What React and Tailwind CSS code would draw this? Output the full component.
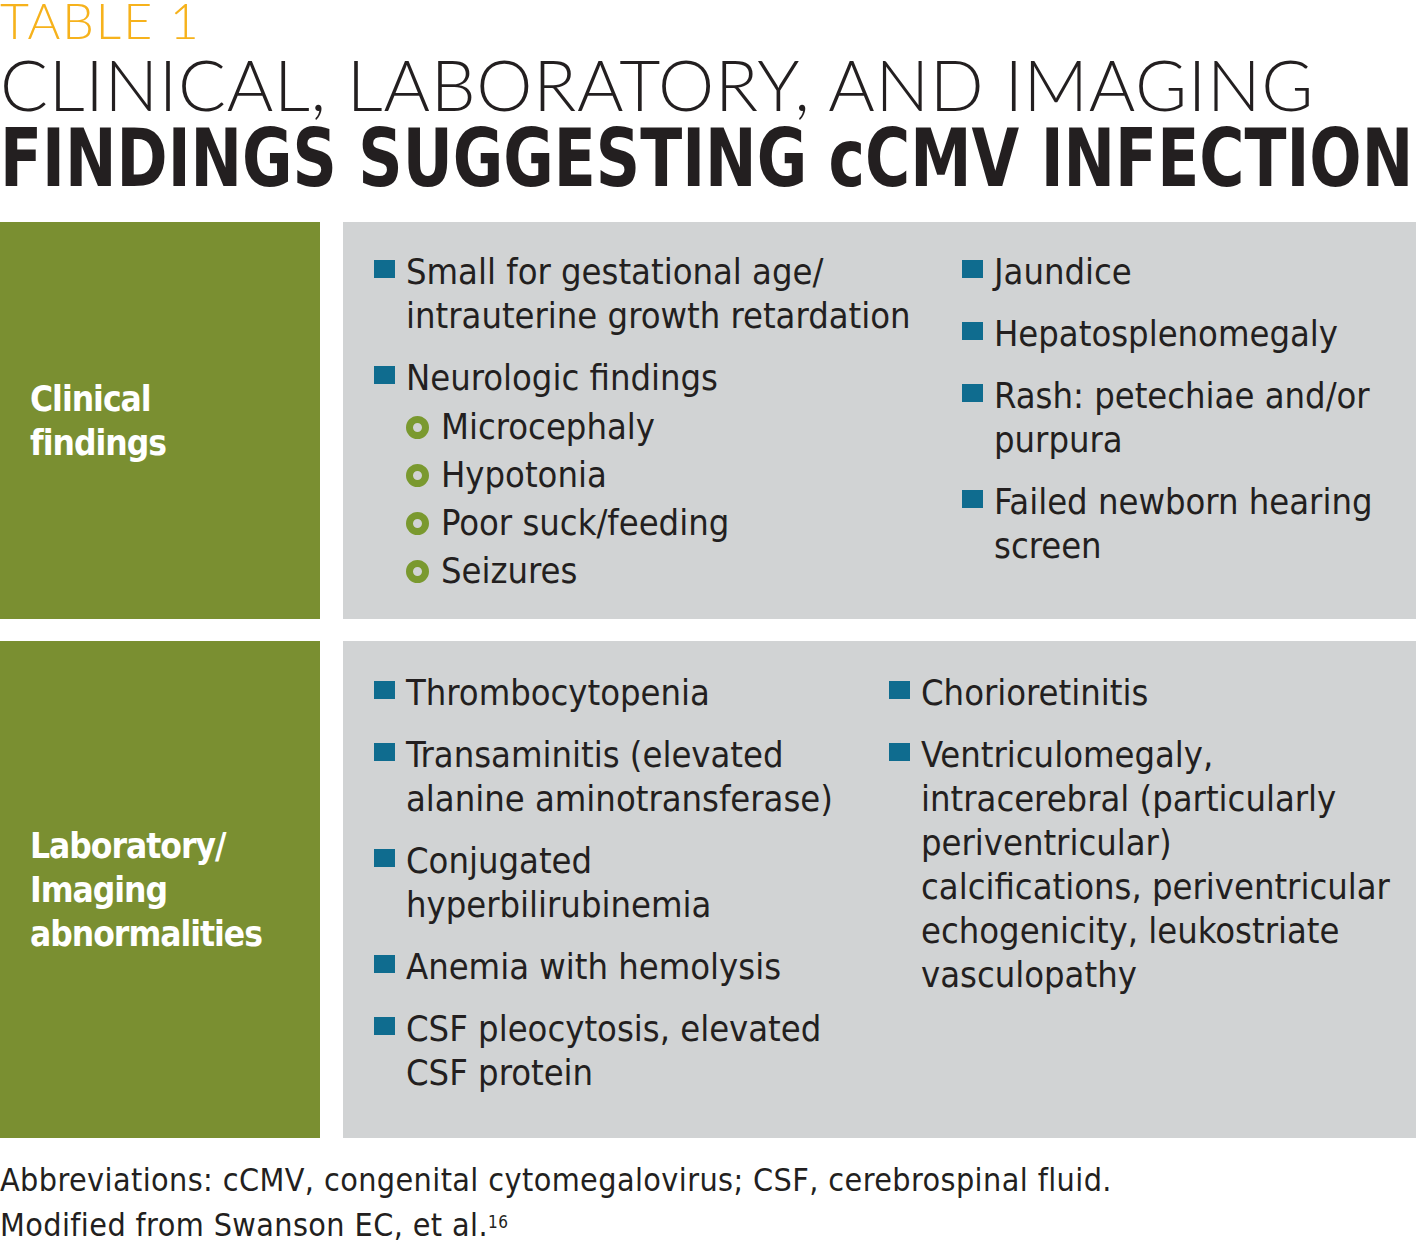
import React from 'react'

const BODY_FONT = "font-['Liberation_Sans_Narrow','DejaVu_Sans_Condensed','Roboto',sans-serif]"

const clinicalLeft = [
  { lines: ['Small for gestational age/', 'intrauterine growth retardation'] },
  {
    lines: ['Neurologic findings'],
    subs: ['Microcephaly', 'Hypotonia', 'Poor suck/feeding', 'Seizures'],
  },
]

const clinicalRight = [
  { lines: ['Jaundice'] },
  { lines: ['Hepatosplenomegaly'] },
  { lines: ['Rash: petechiae and/or', 'purpura'] },
  { lines: ['Failed newborn hearing', 'screen'] },
]

const labLeft = [
  { lines: ['Thrombocytopenia'] },
  { lines: ['Transaminitis (elevated', 'alanine aminotransferase)'] },
  { lines: ['Conjugated', 'hyperbilirubinemia'] },
  { lines: ['Anemia with hemolysis'] },
  { lines: ['CSF pleocytosis, elevated', 'CSF protein'] },
]

const labRight = [
  { lines: ['Chorioretinitis'] },
  {
    lines: [
      'Ventriculomegaly,',
      'intracerebral (particularly',
      'periventricular)',
      'calcifications, periventricular',
      'echogenicity, leukostriate',
      'vasculopathy',
    ],
  },
]

function Item({ item }) {
  return (
    <li className="flex gap-[11px]">
      <span className="mt-[10px] h-[18px] w-[21px] shrink-0 bg-[#0f6c8f]" />
      <div>
        {item.lines.map((l, i) => (
          <div key={i} className="whitespace-nowrap leading-[44px]">{l}</div>
        ))}
        {item.subs && (
          <ul className="flex flex-col gap-[4px] pt-[5px]">
            {item.subs.map((s, i) => (
              <li key={i} className="flex gap-[12px]">
                <span className="mt-[11px] h-[23px] w-[23px] shrink-0 rounded-full border-[7px] border-[#7a992f]" />
                <span className="whitespace-nowrap leading-[44px]">{s}</span>
              </li>
            ))}
          </ul>
        )}
      </div>
    </li>
  )
}

function Column({ items }) {
  return (
    <ul className="flex flex-col gap-[18px]">
      {items.map((it, i) => (
        <Item key={i} item={it} />
      ))}
    </ul>
  )
}

function Row({ label, left, right, leftWidth, height, padTop }) {
  return (
    <div className="flex gap-[23px] pr-[3px]" style={{ height }}>
      <div className="flex w-[320px] shrink-0 items-center bg-[#7a8f31] pl-[30px] text-[35px] font-bold leading-[44px] tracking-[-1px] text-white">
        <div>
          {label.map((l, i) => (
            <div key={i}>{l}</div>
          ))}
        </div>
      </div>
      <div
        className="flex flex-1 bg-[#d1d3d4] pl-[31px] text-[36px] text-[#231f20]"
        style={{ paddingTop: padTop }}
      >
        <div className="shrink-0" style={{ width: leftWidth }}>
          <Column items={left} />
        </div>
        <div>
          <Column items={right} />
        </div>
      </div>
    </div>
  )
}

export default function App() {
  return (
    <div className={`h-[1249px] w-[1419px] overflow-hidden bg-white text-[#231f20] ${BODY_FONT}`}>
      <div className="font-['Lato','Open_Sans',sans-serif] font-light">
        <div className="h-[40px] text-[50px] leading-[40px] tracking-[2px] text-[#f6b21c]">TABLE 1</div>
        <div className="mt-[8px] h-[72px] whitespace-nowrap text-[71px] leading-[72px] tracking-[0.7px]">
          CLINICAL, LABORATORY, AND IMAGING
        </div>
      </div>
      <div className={`h-[102px] whitespace-nowrap text-[81px] font-bold leading-[76px] ${BODY_FONT}`}>
        <span className="inline-block origin-left scale-x-[0.845]">FINDINGS SUGGESTING cCMV INFECTION</span>
      </div>
      <div className="flex flex-col gap-[22px]">
        <Row
          label={['Clinical', 'findings']}
          left={clinicalLeft}
          right={clinicalRight}
          leftWidth={588}
          height={397}
          padTop={28}
        />
        <Row
          label={['Laboratory/', 'Imaging', 'abnormalities']}
          left={labLeft}
          right={labRight}
          leftWidth={515}
          height={497}
          padTop={30}
        />
      </div>
      <div className="mt-[20px] text-[32px] leading-[45px] tracking-[0.4px]">
        <div>Abbreviations: cCMV, congenital cytomegalovirus; CSF, cerebrospinal fluid.</div>
        <div>
          Modified from Swanson EC, et al.<sup className="text-[17px]">16</sup>
        </div>
      </div>
    </div>
  )
}
